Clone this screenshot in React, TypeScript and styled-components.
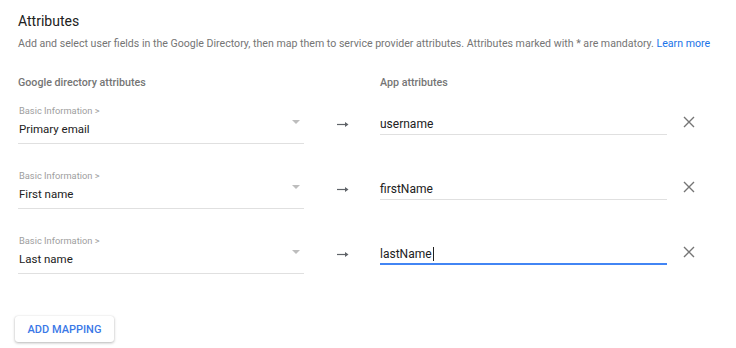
import styled, { createGlobalStyle } from "styled-components";

const GlobalStyle = createGlobalStyle`
  html, body {
    margin: 0;
    padding: 0;
    background: #fff;
  }
  body {
    font-family: Roboto, "Liberation Sans", Arial, sans-serif;
    color: #212121;
  }
`;

const Page = styled.div`
  width: 736px;
  height: 348px;
  box-sizing: border-box;
  padding: 12px 0 0 18px;
  overflow: hidden;
`;

const Title = styled.h2`
  margin: 0;
  font-size: 14px;
  font-weight: 400;
  line-height: 18px;
  color: #212121;
`;

const Description = styled.p`
  margin: 6px 0 0;
  font-size: 10.6px;
  line-height: 16px;
  color: #757575;
  white-space: nowrap;
`;

const Link = styled.a`
  color: #1a73e8;
  text-decoration: none;
`;

const Grid = styled.div`
  display: grid;
  grid-template-columns: 286px 76px 287px 40px;
  align-items: center;
`;

const HeaderRow = styled(Grid)`
  margin-top: 23px;
  height: 16px;
`;

const ColumnHeader = styled.div`
  font-size: 10.7px;
  font-weight: 500;
  color: #757575;
  line-height: 16px;
`;

const MappingRow = styled(Grid)`
  margin-top: ${(p: { $first?: boolean }) => (p.$first ? "14px" : "26px")};
  height: 39px;
`;

const Select = styled.div`
  display: flex;
  align-items: center;
  height: 39px;
  box-sizing: border-box;
  border-bottom: 1px solid #e0e0e0;
`;

const SelectText = styled.div`
  flex: 1;
  display: flex;
  flex-direction: column;
`;

const SelectLabel = styled.span`
  font-size: 9.3px;
  line-height: 12px;
  color: #9e9e9e;
  padding-left: 1px;
`;

const SelectValue = styled.span`
  margin-top: 3px;
  font-size: 11.5px;
  line-height: 18px;
  color: #212121;
  padding-left: 1px;
  padding-bottom: 5px;
`;

const Caret = styled.span`
  width: 0;
  height: 0;
  margin: 0 4px 4px 0;
  border-left: 4.5px solid transparent;
  border-right: 4.5px solid transparent;
  border-top: 4.5px solid #bdbdbd;
`;

const ArrowCell = styled.div`
  display: flex;
  padding-left: 33px;
`;

const InputWrap = styled.div<{ $focused?: boolean }>`
  display: flex;
  align-items: center;
  height: 20px;
  box-sizing: border-box;
  border-bottom: ${(p) => (p.$focused ? "2px solid #4285f4" : "1px solid #e0e0e0")};
  padding-bottom: ${(p) => (p.$focused ? "0" : "1px")};
  font-size: 12px;
  line-height: 16px;
  color: #212121;
`;

const TextCaret = styled.span`
  display: inline-block;
  width: 1px;
  height: 14px;
  background: #212121;
  margin-left: 1px;
`;

const RemoveButton = styled.div`
  display: flex;
  padding-left: 16px;
  padding-bottom: 6px;
`;

const AddButton = styled.button`
  margin-top: 42px;
  margin-left: -3px;
  width: 99px;
  height: 26px;
  border: none;
  border-radius: 3px;
  background: #fff;
  box-shadow: 0 1px 3px rgba(0, 0, 0, 0.28), 0 0 1px rgba(0, 0, 0, 0.12);
  font-family: Roboto, "Liberation Sans", Arial, sans-serif;
  font-size: 11px;
  font-weight: 500;
  color: #3b78e7;
  padding: 0;
`;

const ArrowIcon = () => (
  <svg width="12" height="7" viewBox="0 0 12 7">
    <path d="M0 3.5H10" stroke="#5f6368" strokeWidth="1.2" />
    <path d="M8 0.9L11.5 3.5L8 6.1Z" fill="#5f6368" />
  </svg>
);

const CloseIcon = () => (
  <svg width="12" height="12" viewBox="0 0 12 12">
    <path d="M1 1L11 11M11 1L1 11" stroke="#757575" strokeWidth="1.4" />
  </svg>
);

const mappings = [
  { label: "Basic Information >", value: "Primary email", app: "username" },
  { label: "Basic Information >", value: "First name", app: "firstName" },
  { label: "Basic Information >", value: "Last name", app: "lastName", focused: true },
];

export default function App() {
  return (
    <>
      <GlobalStyle />
      <Page>
        <Title>Attributes</Title>
        <Description>
          Add and select user fields in the Google Directory, then map them to service provider
          attributes. Attributes marked with * are mandatory. <Link href="#">Learn more</Link>
        </Description>

        <HeaderRow>
          <ColumnHeader>Google directory attributes</ColumnHeader>
          <div />
          <ColumnHeader>App attributes</ColumnHeader>
        </HeaderRow>

        {mappings.map((m, i) => (
          <MappingRow key={m.app} $first={i === 0}>
            <Select>
              <SelectText>
                <SelectLabel>{m.label}</SelectLabel>
                <SelectValue>{m.value}</SelectValue>
              </SelectText>
              <Caret />
            </Select>
            <ArrowCell>
              <ArrowIcon />
            </ArrowCell>
            <InputWrap $focused={m.focused}>
              {m.app}
              {m.focused && <TextCaret />}
            </InputWrap>
            <RemoveButton>
              <CloseIcon />
            </RemoveButton>
          </MappingRow>
        ))}

        <AddButton>ADD MAPPING</AddButton>
      </Page>
    </>
  );
}
